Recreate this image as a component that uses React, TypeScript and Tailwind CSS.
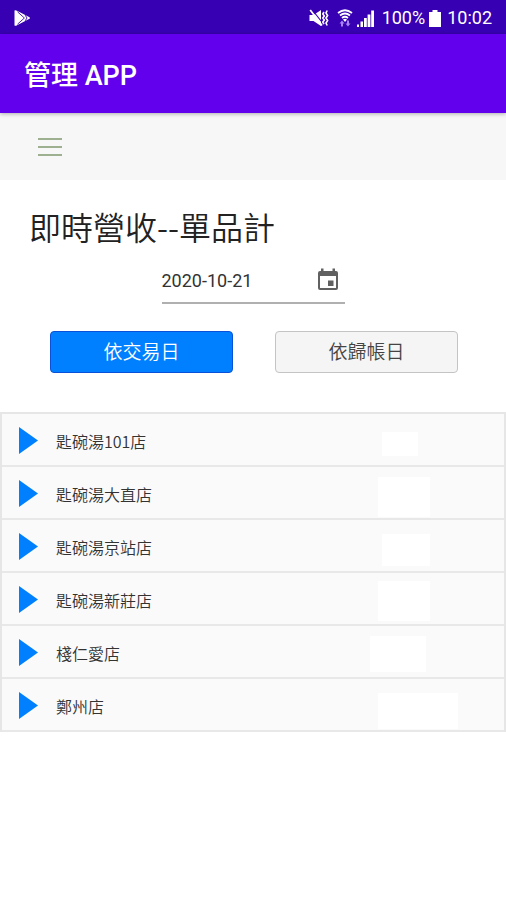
import { useState } from "react";

interface Store {
  name: string;
  amountClass: string;
}

const stores: Store[] = [
  { name: "匙碗湯101店", amountClass: "ml-3 mt-2 h-6 w-9" },
  { name: "匙碗湯大直店", amountClass: "ml-2 mt-2 h-10 w-13" },
  { name: "匙碗湯京站店", amountClass: "ml-3 mt-2 h-8 w-12" },
  { name: "匙碗湯新莊店", amountClass: "ml-2 mt-1 h-10 w-13" },
  { name: "棧仁愛店", amountClass: "mt-1 h-9 w-14" },
  { name: "鄭州店", amountClass: "ml-2 mt-3 h-9 w-20" },
];

function PlayStoreIcon() {
  return (
    <svg width="16" height="16" viewBox="0 0 16 16" aria-hidden="true">
      <path d="M0.5 0.5Q1.5-0.3 3 0.8L15.5 7.2Q16.4 8 15.5 8.8L3 15.2Q1.5 16.3 0.5 15.5Z" fill="#fff" />
      <path d="M3.5 1.8 10.4 8 3.5 14.2M11.2 5.2 13 8 11.2 10.8" fill="none" stroke="#3700b3" strokeWidth="0.9" />
    </svg>
  );
}

function MutedIcon() {
  return (
    <svg width="20" height="18" viewBox="0 0 20 18" aria-hidden="true">
      <path d="M0.5 6h4L12 1v16l-7.5-5h-4Z" fill="#fff" />
      <path d="M3 0.5 14 14.5" stroke="#3700b3" strokeWidth="1.2" />
      <path d="M1.2 1 13 16.5" stroke="#fff" strokeWidth="1.8" />
      <path d="M15 3 13.8 5l1.5 2-1.5 2 1.5 2-1.5 2 1.2 2M18.2 1.5 17 4l1.6 2.5L17 9l1.6 2.5L17 14l1.2 2.5" fill="none" stroke="#fff" strokeWidth="1.6" />
    </svg>
  );
}

function WifiIcon() {
  return (
    <svg width="16" height="18" viewBox="0 0 16 18" aria-hidden="true">
      <path d="M1 4Q8-1.5 15 4M3 6.5Q8 2.5 13 6.5M5 9Q8 6.5 11 9" fill="none" stroke="#fff" strokeWidth="1.8" />
      <path d="M6 10.5Q8 9 10 10.5L8 13Z" fill="#fff" />
      <path d="M2.5 14.5 5 11.5l2.5 3H6V17.5H4v-3ZM8.5 14.5H10v-3h2v3h1.5L11 17.5Z" fill="#a783f5" />
    </svg>
  );
}

function SignalIcon() {
  return (
    <svg width="17" height="17" viewBox="0 0 17 17" aria-hidden="true">
      <path d="M0 14.5h2V17H0ZM3.5 11.5H6V17H3.5ZM7 8h2.8v9H7ZM10.6 4.5h2.8V17h-2.8ZM14.2 0.5H17V17h-2.8Z" fill="#fff" />
    </svg>
  );
}

function BatteryIcon() {
  return (
    <svg width="12" height="17" viewBox="0 0 12 17" aria-hidden="true">
      <path d="M3.5 0h5v2H12v15H0V2h3.5Z" fill="#fff" />
    </svg>
  );
}

function CalendarIcon() {
  return (
    <svg width="24" height="26" viewBox="0 0 24 26" aria-hidden="true">
      <path
        d="M5 1.5h2.5V4h9V1.5H19V4h1a2 2 0 0 1 2 2v15a2 2 0 0 1-2 2H4a2 2 0 0 1-2-2V6a2 2 0 0 1 2-2h1ZM4 9v12h16V9ZM12 13.5h5.5V19H12Z"
        fill="#616161"
        fillRule="evenodd"
      />
    </svg>
  );
}

function StatusBar() {
  return (
    <div className="flex h-[34px] items-center justify-between bg-[#3700b3] px-[14px] pt-[2px] text-[18px] leading-5 text-white">
      <PlayStoreIcon />
      <div className="flex items-center">
        <MutedIcon />
        <span className="ml-2">
          <WifiIcon />
        </span>
        <span className="ml-1">
          <SignalIcon />
        </span>
        <span className="ml-2">100%</span>
        <span className="ml-1">
          <BatteryIcon />
        </span>
        <span className="ml-[6px]">10:02</span>
      </div>
    </div>
  );
}

export default function App() {
  const [mode, setMode] = useState("trade");
  const [date, setDate] = useState("2020-10-21");

  const active = "border-[#0a50d8] bg-[#0080ff] text-white";
  const idle = "border-[#c4c4c4] bg-[#f5f5f5] text-[#444]";

  return (
    <div className="min-h-screen bg-white font-[Roboto,'Noto_Sans_CJK_TC',sans-serif] text-[#222]">
      <StatusBar />
      <header className="relative flex h-[79px] items-center bg-[#6200ee] px-6 pt-1 shadow-[0_1px_4px_rgba(0,0,0,0.3)]">
        <span className="text-[27px] leading-8 font-medium text-white">管理 APP</span>
      </header>
      <nav className="flex h-[67px] items-center bg-[#f7f7f7] px-[38px]">
        <button type="button" aria-label="選單" className="flex w-6 flex-col gap-[6px]">
          <span className="h-[2px] bg-[#9db08f]" />
          <span className="h-[2px] bg-[#9db08f]" />
          <span className="h-[2px] bg-[#9db08f]" />
        </button>
      </nav>

      <main>
        <h1 className="px-[29px] pt-[22px] font-['Noto_Sans_CJK_TC',sans-serif] text-[32px] leading-12 font-[350]">
          即時營收--單品計
        </h1>

        <div className="mx-auto mt-2 flex h-[46px] w-[183px] items-center justify-between border-b-2 border-[#b0b0b0] pr-[5px]">
          <input
            type="text"
            aria-label="日期"
            value={date}
            onChange={(e) => setDate(e.target.value)}
            className="w-28 bg-transparent pt-[2px] text-[18px] leading-6 text-[#333] outline-none"
          />
          <button type="button" aria-label="選擇日期">
            <CalendarIcon />
          </button>
        </div>

        <div className="grid grid-cols-2 gap-[42px] pt-[27px] pr-[48px] pb-[39px] pl-[50px] text-[19px] leading-6 font-[350]">
          <button
            type="button"
            onClick={() => setMode("trade")}
            className={`h-[42px] rounded-[4px] border-[1px] pt-[2px] ${mode === "trade" ? active : idle}`}
          >
            依交易日
          </button>
          <button
            type="button"
            onClick={() => setMode("account")}
            className={`h-[42px] rounded-[4px] border-[1px] pt-[2px] ${mode === "account" ? active : idle}`}
          >
            依歸帳日
          </button>
        </div>

        <table className="w-full table-fixed border-separate border-spacing-0 border-x-2 border-t-2 border-[#e6e6e6] bg-[#fafafa] font-['Noto_Sans_CJK_TC',sans-serif] text-[16px] leading-6 text-[#333]">
          <tbody>
            {stores.map((store) => (
              <tr key={store.name} className="h-[53px]">
                <td className="w-[54px] border-b-2 border-[#e8e8e8] pt-[2px] pl-[17px]">
                  <button type="button" aria-label={`展開${store.name}`} className="block">
                    <svg width="20" height="27" viewBox="0 0 20 27" aria-hidden="true">
                      <path d="M0 0 19 13.5 0 27Z" fill="#0080ff" />
                    </svg>
                  </button>
                </td>
                <td className="border-b-2 border-[#e8e8e8] pt-[2px] font-[350]">{store.name}</td>
                <td className="w-[134px] border-b-2 border-[#e8e8e8]">
                  <div className={`bg-white ${store.amountClass}`} />
                </td>
              </tr>
            ))}
          </tbody>
        </table>
      </main>
    </div>
  );
}
